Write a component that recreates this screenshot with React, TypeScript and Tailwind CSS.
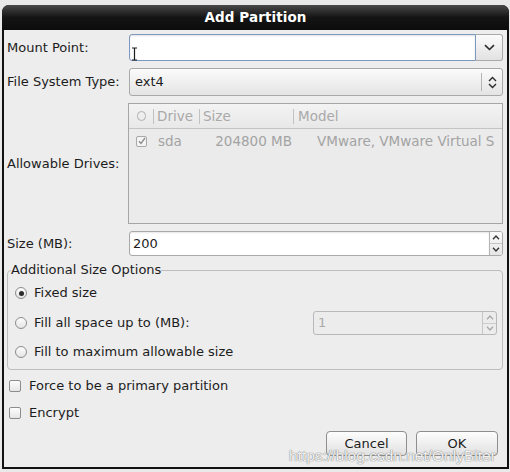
import React from 'react';

const font = "font-['DejaVu_Sans','Liberation_Sans',sans-serif]";

const ChevronDown = () => (
  <svg width="11" height="7" viewBox="0 0 11 7" fill="none">
    <path d="M1 1.2 L5.5 5.5 L10 1.2" stroke="#2a2a2a" strokeWidth="1.6" />
  </svg>
);

const UpDown = ({ color = '#2a2a2a' }: { color?: string }) => (
  <svg width="9" height="13" viewBox="0 0 9 13" fill="none">
    <path d="M1 5 L4.5 1.5 L8 5" stroke={color} strokeWidth="1.4" />
    <path d="M1 8 L4.5 11.5 L8 8" stroke={color} strokeWidth="1.4" />
  </svg>
);

const Caret = ({ up, color = '#333' }: { up?: boolean; color?: string }) => (
  <svg width="8" height="5" viewBox="0 0 8 5" fill="none">
    {up ? (
      <path d="M1 4.2 L4 1 L7 4.2" stroke={color} strokeWidth="1.3" />
    ) : (
      <path d="M1 0.8 L4 4 L7 0.8" stroke={color} strokeWidth="1.3" />
    )}
  </svg>
);

const Radio = ({ on }: { on?: boolean }) => (
  <span className="w-[12px] h-[12px] rounded-full border border-[#8c8c8c] bg-linear-to-b from-[#fdfdfd] to-[#e4e4e4] flex items-center justify-center shrink-0">
    {on && <span className="w-[5px] h-[5px] rounded-full bg-[#2b2b2b]"></span>}
  </span>
);

const Check = () => (
  <span className="w-[12px] h-[12px] rounded-[2px] border border-[#8c8c8c] bg-linear-to-b from-[#fdfdfd] to-[#e6e6e6] shrink-0"></span>
);

const Label = ({ children }: { children: React.ReactNode }) => (
  <div className="flex items-center text-[13px] text-[#1c1c1c] whitespace-nowrap">{children}</div>
);

const App: React.FC = () => {
  return (
    <div className={`relative w-[510px] h-[472px] bg-[#e9e9e9] overflow-hidden ${font}`}>
      {/* dialog window */}
      <div className="ml-[2px] mt-[5px] w-[507px] bg-[#111] rounded-t-[7px] px-[2px] pb-[2px]">
        {/* Title bar */}
        <div className="h-[25px] -mx-[2px] rounded-t-[7px] bg-linear-to-b from-[#4a4a4a] via-[#141414] to-[#0c0c0c] flex items-center justify-center">
          <span className="text-white font-bold text-[13.5px] tracking-[0.1px]">Add Partition</span>
        </div>

        {/* Body */}
        <div className="bg-[#ededed] h-[437px] pt-[4px] px-[3px] flex flex-col">
          <div className="grid grid-cols-[122px_374px] gap-y-[7px]">
            {/* Mount point */}
            <Label>Mount Point:</Label>
            <div className="h-[27px] flex">
              <div className="relative flex-1 bg-white border border-[#7d98bf] rounded-l-[3px] shadow-[inset_0_1px_2px_rgba(0,0,0,0.12)]">
                <svg className="absolute left-[1px] top-[12px]" width="7" height="14" viewBox="0 0 7 14" fill="none">
                  <path d="M1 1 H6 M3.5 1 V13 M1 13 H6" stroke="#1a1a1a" strokeWidth="1.2" />
                </svg>
              </div>
              <div className="w-[27px] border border-l-0 border-[#a9a9a9] rounded-r-[3px] bg-linear-to-b from-[#fbfbfb] to-[#e2e2e2] flex items-center justify-center">
                <ChevronDown />
              </div>
            </div>

            {/* File system type */}
            <Label>File System Type:</Label>
            <div className="h-[28px] flex items-center border border-[#a9a9a9] rounded-[3px] bg-linear-to-b from-[#fbfbfb] to-[#e4e4e4] text-[13px] text-[#1c1c1c]">
              <span className="flex-1 pl-[5px]">ext4</span>
              <span className="w-px h-[18px] bg-[#b4b4b4]"></span>
              <span className="w-[20px] flex justify-center"><UpDown /></span>
            </div>

            {/* Allowable drives */}
            <Label>Allowable Drives:</Label>
            <div className="h-[121px] -ml-[1px] border border-[#a6a6a6] bg-[#ebebeb] text-[13.5px] overflow-hidden">
              <div className="h-[25px] flex items-center border-b border-[#c4c4c4] bg-linear-to-b from-[#f3f3f3] to-[#e8e8e8] text-[#a9a9a9] whitespace-nowrap">
                <span className="w-[24px] flex justify-center">
                  <span className="w-[9px] h-[10px] rounded-full border border-[#b0b0b0]"></span>
                </span>
                <span className="w-px h-[15px] bg-[#c2c2c2]"></span>
                <span className="w-[45px] pl-[3px]">Drive</span>
                <span className="w-px h-[15px] bg-[#c2c2c2]"></span>
                <span className="w-[93px] pl-[3px]">Size</span>
                <span className="w-px h-[15px] bg-[#c2c2c2]"></span>
                <span className="pl-[4px]">Model</span>
              </div>
              <div className="h-[24px] flex items-center text-[#a3a3a3] whitespace-nowrap">
                <span className="w-[24px] flex justify-center pl-[1px]">
                  <span className="w-[11px] h-[11px] rounded-[2px] border border-[#a8a8a8] bg-[#f4f4f4] flex items-center justify-center">
                    <svg width="8" height="8" viewBox="0 0 8 8" fill="none">
                      <path d="M1 4.2 L3 6.5 L7 1" stroke="#8f8f8f" strokeWidth="1.4" />
                    </svg>
                  </span>
                </span>
                <span className="w-[47px] pl-[5px]">sda</span>
                <span className="w-[94px] text-right pr-[2px]">204800 MB</span>
                <span className="pl-[23px]">VMware, VMware Virtual S</span>
              </div>
            </div>

            {/* Size */}
            <Label>Size (MB):</Label>
            <div className="h-[25px] flex border border-[#a9a9a9] rounded-[3px] bg-white overflow-hidden">
              <span className="flex-1 flex items-center pl-[3px] text-[13px] text-[#1c1c1c] shadow-[inset_0_1px_2px_rgba(0,0,0,0.1)]">200</span>
              <span className="w-[13px] flex flex-col border-l border-[#b4b4b4] bg-linear-to-b from-[#fafafa] to-[#e6e6e6]">
                <span className="flex-1 flex items-center justify-center border-b border-[#c4c4c4]"><Caret up /></span>
                <span className="flex-1 flex items-center justify-center"><Caret /></span>
              </span>
            </div>
          </div>

          {/* Additional size options */}
          <fieldset className="mt-[6px] mr-[1px] border border-[#bdbdbd] rounded-[4px] px-[3px] pb-[7px] text-[13px] text-[#1c1c1c]">
            <legend className="px-0 leading-[16px]">Additional Size Options</legend>
            <div className="pl-[4px] mt-[5px] h-[20px] flex items-center gap-[7px]">
              <Radio on />
              <span>Fixed size</span>
            </div>
            <div className="pl-[4px] mt-[8px] h-[24px] flex items-center gap-[7px]">
              <Radio />
              <span className="flex-1">Fill all space up to (MB):</span>
              <div className="w-[184px] h-[24px] mr-[2px] flex border border-[#b9b9b9] rounded-[3px] bg-[#ececec] overflow-hidden">
                <span className="flex-1 flex items-center pl-[4px] text-[#a9a9a9]">1</span>
                <span className="w-[14px] flex flex-col border-l border-[#c6c6c6]">
                  <span className="flex-1 flex items-center justify-center border-b border-[#cccccc]"><Caret up color="#a8a8a8" /></span>
                  <span className="flex-1 flex items-center justify-center"><Caret color="#a8a8a8" /></span>
                </span>
              </div>
            </div>
            <div className="pl-[4px] mt-[7px] h-[20px] flex items-center gap-[7px]">
              <Radio />
              <span>Fill to maximum allowable size</span>
            </div>
          </fieldset>

          {/* Checkboxes */}
          <div className="mt-[7px] ml-[2px] h-[18px] flex items-center gap-[8px] text-[13px] text-[#1c1c1c]">
            <Check />
            <span>Force to be a primary partition</span>
          </div>
          <div className="mt-[9px] ml-[2px] h-[18px] flex items-center gap-[8px] text-[13px] text-[#1c1c1c]">
            <Check />
            <span>Encrypt</span>
          </div>

          {/* Buttons */}
          <div className="mt-[9px] mr-[6px] flex justify-end gap-[9px] text-[13px] text-[#1c1c1c]">
            <button className="w-[81px] h-[25px] border border-[#8e8e8e] rounded-[4px] bg-linear-to-b from-[#fdfdfd] to-[#e1e1e1]">Cancel</button>
            <button className="w-[82px] h-[25px] border border-[#8e8e8e] rounded-[4px] bg-linear-to-b from-[#fdfdfd] to-[#e1e1e1]">OK</button>
          </div>
        </div>
      </div>

      {/* watermark */}
      <div className="absolute left-[289px] top-[444px] text-[15.5px] text-white/90 font-['Liberation_Sans',sans-serif] [text-shadow:0_0_1px_#7a7a7a,0_0_1px_#7a7a7a] whitespace-nowrap pointer-events-none">
        https://blog.csdn.net/OnlyBiter
      </div>
    </div>
  );
};

export default App;
